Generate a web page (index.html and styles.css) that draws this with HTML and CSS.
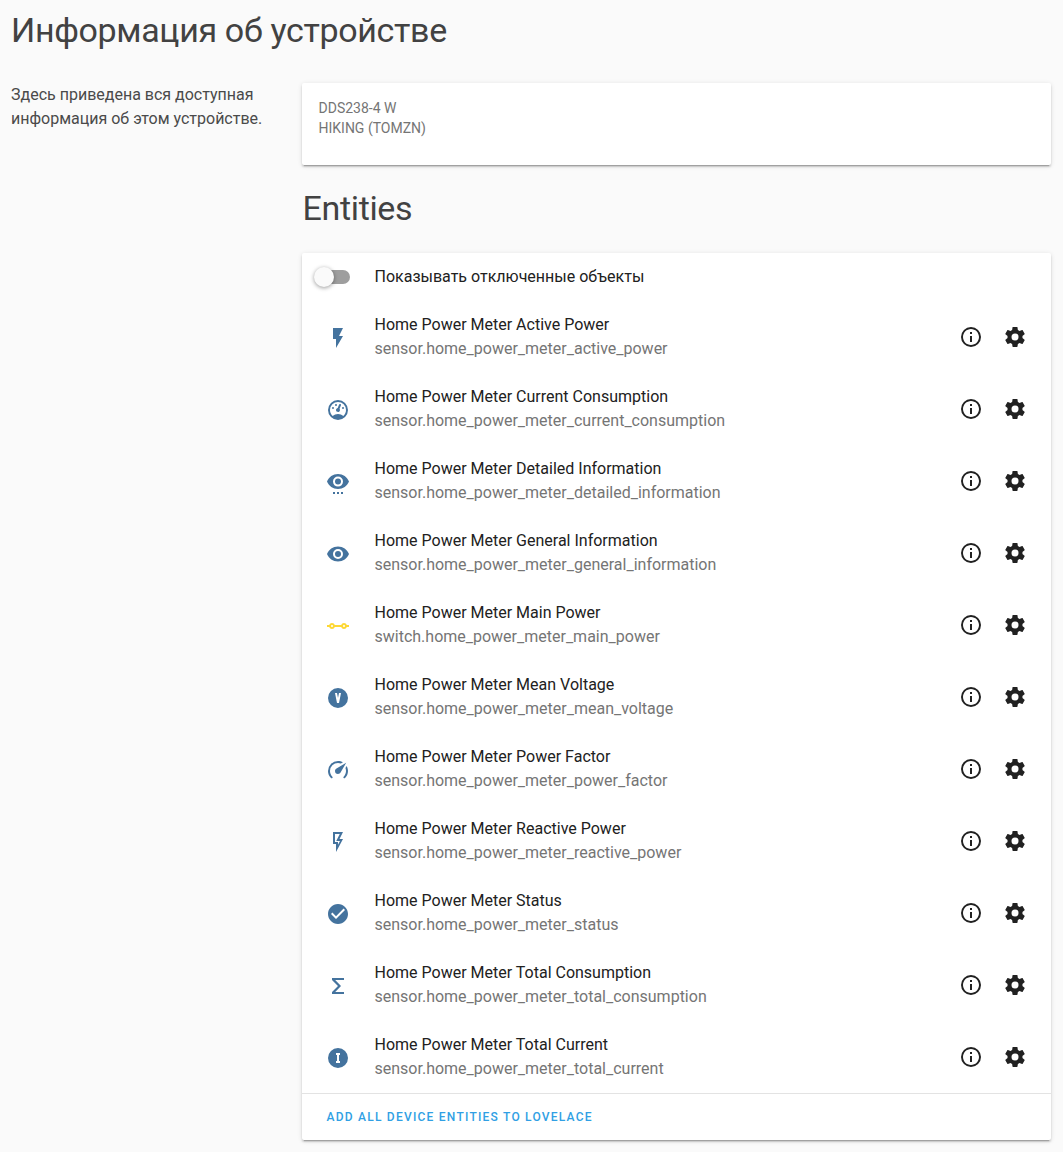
FILE: index.html
```html
<!DOCTYPE html>
<html lang="ru">
<head>
<meta charset="utf-8">
<title>Информация об устройстве</title>
<link rel="stylesheet" href="styles.css">
</head>
<body>
<svg class="sprite" aria-hidden="true">
  <symbol id="flash" viewBox="0 0 24 24"><path d="M7,2V13H10V22L17,10H13L17,2H7Z"/></symbol>
  <symbol id="gauge" viewBox="0 0 24 24"><path d="M12,2A10,10 0 0,0 2,12A10,10 0 0,0 12,22A10,10 0 0,0 22,12A10,10 0 0,0 12,2M12,4A8,8 0 0,1 20,12C20,14.4 19,16.5 17.3,18C15.9,16.7 14,16 12,16C10,16 8.2,16.7 6.7,18C5,16.5 4,14.4 4,12A8,8 0 0,1 12,4M14,5.89C13.62,5.9 13.26,6.15 13.1,6.54L11.81,9.77L11.71,10C11,10.13 10.41,10.6 10.14,11.26C9.73,12.29 10.23,13.45 11.26,13.86C12.29,14.27 13.45,13.77 13.86,12.74C14.12,12.08 14,11.32 13.57,10.76L13.67,10.5L14.96,7.29L14.97,7.26C15.17,6.75 14.92,6.17 14.41,5.96C14.28,5.91 14.15,5.89 14,5.89M10,6A1,1 0 0,0 9,7A1,1 0 0,0 10,8A1,1 0 0,0 11,7A1,1 0 0,0 10,6M7,9A1,1 0 0,0 6,10A1,1 0 0,0 7,11A1,1 0 0,0 8,10A1,1 0 0,0 7,9M17,9A1,1 0 0,0 16,10A1,1 0 0,0 17,11A1,1 0 0,0 18,10A1,1 0 0,0 17,9Z"/></symbol>
  <symbol id="eye" viewBox="0 0 24 24"><path d="M12,9A3,3 0 0,0 9,12A3,3 0 0,0 12,15A3,3 0 0,0 15,12A3,3 0 0,0 12,9M12,17A5,5 0 0,1 7,12A5,5 0 0,1 12,7A5,5 0 0,1 17,12A5,5 0 0,1 12,17M12,4.5C7,4.5 2.73,7.61 1,12C2.73,16.39 7,19.5 12,19.5C17,19.5 21.27,16.39 23,12C21.27,7.61 17,4.5 12,4.5Z"/></symbol>
  <symbol id="eye-dots" viewBox="0 0 24 24"><path transform="translate(0 -.4)" d="M12,9A3,3 0 0,0 9,12A3,3 0 0,0 12,15A3,3 0 0,0 15,12A3,3 0 0,0 12,9M12,17A5,5 0 0,1 7,12A5,5 0 0,1 12,7A5,5 0 0,1 17,12A5,5 0 0,1 12,17M12,4.5C7,4.5 2.73,7.61 1,12C2.73,16.39 7,19.5 12,19.5C17,19.5 21.27,16.39 23,12C21.27,7.61 17,4.5 12,4.5Z"/><path d="M7,22H9V24H7V22M11,22H13V24H11V22M15,22H17V24H15V22Z"/></symbol>
  <symbol id="switch" viewBox="0 0 24 24"><path d="M1,11H3.17A3,3 0 0,1 8.83,11H15.17A3,3 0 0,1 20.83,11H23V13H20.83A3,3 0 0,1 15.17,13H8.83A3,3 0 0,1 3.17,13H1V11M6,11A1,1 0 0,0 5,12A1,1 0 0,0 6,13A1,1 0 0,0 7,12A1,1 0 0,0 6,11M18,11A1,1 0 0,0 17,12A1,1 0 0,0 18,13A1,1 0 0,0 19,12A1,1 0 0,0 18,11Z"/></symbol>
  <symbol id="volt" viewBox="0 0 24 24"><path d="M12,2A10,10 0 0,1 22,12A10,10 0 0,1 12,22A10,10 0 0,1 2,12A10,10 0 0,1 12,2M9,7L11,17H13L15,7H13L12,12L11,7H9Z"/></symbol>
  <symbol id="speed" viewBox="0 0 24 24"><path d="M12,16A3,3 0 0,1 9,13C9,11.88 9.61,10.9 10.5,10.39L20.21,4.77L14.68,14.35C14.18,15.33 13.17,16 12,16M12,3C13.81,3 15.5,3.5 16.97,4.32L14.87,5.53C14,5.19 13,5 12,5A8,8 0 0,0 4,13C4,15.21 4.89,17.21 6.34,18.65H6.35C6.74,19.04 6.74,19.67 6.35,20.06C5.96,20.45 5.32,20.45 4.93,20.07V20.07C3.12,18.26 2,15.76 2,13A10,10 0 0,1 12,3M22,13C22,15.76 20.88,18.26 19.07,20.07V20.07C18.68,20.45 18.05,20.45 17.66,20.06C17.27,19.67 17.27,19.04 17.66,18.65V18.65C19.11,17.2 20,15.21 20,13C20,12 19.81,11 19.46,10.1L20.67,8C21.5,9.5 22,11.18 22,13Z"/></symbol>
  <symbol id="flash-outline" viewBox="0 0 24 24"><path d="M7,2H17L13.5,9H17L10,22V14H7V2M9,4V12H12V14.66L14,11H10.24L13.76,4H9Z"/></symbol>
  <symbol id="check" viewBox="0 0 24 24"><path d="M12 2C6.5 2 2 6.5 2 12S6.5 22 12 22 22 17.5 22 12 17.5 2 12 2M10 17L5 12L6.41 10.59L10 14.17L17.59 6.58L19 8L10 17Z"/></symbol>
  <symbol id="sigma" viewBox="0 0 24 24"><path d="M6,4H18V6H9.2L15,12L9.2,18H18V20H6V18L12,12L6,6Z"/></symbol>
  <symbol id="current" viewBox="0 0 24 24"><path d="M12,2A10,10 0 0,1 22,12A10,10 0 0,1 12,22A10,10 0 0,1 2,12A10,10 0 0,1 12,2M10,7V9H11V15H10V17H14V15H13V9H14V7H10Z"/></symbol>
  <symbol id="info" viewBox="0 0 24 24"><path d="M11,9H13V7H11M12,20C7.59,20 4,16.41 4,12C4,7.59 7.59,4 12,4C16.41,4 20,7.59 20,12C20,16.41 16.41,20 12,20M12,2A10,10 0 0,0 2,12A10,10 0 0,0 12,22A10,10 0 0,0 22,12A10,10 0 0,0 12,2M11,17H13V11H11V17Z"/></symbol>
  <symbol id="gear" viewBox="0 0 24 24"><path d="M12,15.5A3.5,3.5 0 0,1 8.5,12A3.5,3.5 0 0,1 12,8.5A3.5,3.5 0 0,1 15.5,12A3.5,3.5 0 0,1 12,15.5M19.43,12.97C19.47,12.65 19.5,12.33 19.5,12C19.5,11.67 19.47,11.34 19.43,11L21.54,9.37C21.73,9.22 21.78,8.95 21.66,8.73L19.66,5.27C19.54,5.05 19.27,4.96 19.05,5.05L16.56,6.05C16.04,5.66 15.5,5.32 14.87,5.07L14.5,2.42C14.46,2.18 14.25,2 14,2H10C9.75,2 9.54,2.18 9.5,2.42L9.13,5.07C8.5,5.32 7.96,5.66 7.44,6.05L4.95,5.05C4.73,4.96 4.46,5.05 4.34,5.27L2.34,8.73C2.21,8.95 2.27,9.22 2.46,9.37L4.57,11C4.53,11.34 4.5,11.67 4.5,12C4.5,12.33 4.53,12.65 4.57,12.97L2.46,14.63C2.27,14.78 2.21,15.05 2.34,15.27L4.34,18.73C4.46,18.95 4.73,19.03 4.95,18.95L7.44,17.94C7.96,18.34 8.5,18.68 9.13,18.93L9.5,21.58C9.54,21.82 9.75,22 10,22H14C14.25,22 14.46,21.82 14.5,21.58L14.87,18.93C15.5,18.67 16.04,18.34 16.56,17.94L19.05,18.95C19.27,19.03 19.54,18.95 19.66,18.73L21.66,15.27C21.78,15.05 21.73,14.78 21.54,14.63L19.43,12.97Z"/></symbol>
</svg>
<main class="page">
  <h1 class="title">Информация об устройстве</h1>
  <div class="layout">
    <p class="intro">Здесь приведена вся доступная информация об этом устройстве.</p>
    <div class="content">
      <section class="card device"><div>DDS238-4 W</div><div>HIKING (TOMZN)</div></section>
      <h2 class="title subtitle">Entities</h2>
      <section class="card">
        <label class="toggle-row"><span class="toggle"></span><span>Показывать отключенные объекты</span></label>
        <ul class="entities">
          <li class="entity"><svg class="icon state"><use href="#flash"/></svg><div class="names"><div>Home Power Meter Active Power</div><div class="id">sensor.home_power_meter_active_power</div></div><svg class="icon"><use href="#info"/></svg><svg class="icon"><use href="#gear"/></svg></li>
          <li class="entity"><svg class="icon state"><use href="#gauge"/></svg><div class="names"><div>Home Power Meter Current Consumption</div><div class="id">sensor.home_power_meter_current_consumption</div></div><svg class="icon"><use href="#info"/></svg><svg class="icon"><use href="#gear"/></svg></li>
          <li class="entity"><svg class="icon state"><use href="#eye-dots"/></svg><div class="names"><div>Home Power Meter Detailed Information</div><div class="id">sensor.home_power_meter_detailed_information</div></div><svg class="icon"><use href="#info"/></svg><svg class="icon"><use href="#gear"/></svg></li>
          <li class="entity"><svg class="icon state"><use href="#eye"/></svg><div class="names"><div>Home Power Meter General Information</div><div class="id">sensor.home_power_meter_general_information</div></div><svg class="icon"><use href="#info"/></svg><svg class="icon"><use href="#gear"/></svg></li>
          <li class="entity"><svg class="icon state on"><use href="#switch"/></svg><div class="names"><div>Home Power Meter Main Power</div><div class="id">switch.home_power_meter_main_power</div></div><svg class="icon"><use href="#info"/></svg><svg class="icon"><use href="#gear"/></svg></li>
          <li class="entity"><svg class="icon state"><use href="#volt"/></svg><div class="names"><div>Home Power Meter Mean Voltage</div><div class="id">sensor.home_power_meter_mean_voltage</div></div><svg class="icon"><use href="#info"/></svg><svg class="icon"><use href="#gear"/></svg></li>
          <li class="entity"><svg class="icon state"><use href="#speed"/></svg><div class="names"><div>Home Power Meter Power Factor</div><div class="id">sensor.home_power_meter_power_factor</div></div><svg class="icon"><use href="#info"/></svg><svg class="icon"><use href="#gear"/></svg></li>
          <li class="entity"><svg class="icon state"><use href="#flash-outline"/></svg><div class="names"><div>Home Power Meter Reactive Power</div><div class="id">sensor.home_power_meter_reactive_power</div></div><svg class="icon"><use href="#info"/></svg><svg class="icon"><use href="#gear"/></svg></li>
          <li class="entity"><svg class="icon state"><use href="#check"/></svg><div class="names"><div>Home Power Meter Status</div><div class="id">sensor.home_power_meter_status</div></div><svg class="icon"><use href="#info"/></svg><svg class="icon"><use href="#gear"/></svg></li>
          <li class="entity"><svg class="icon state"><use href="#sigma"/></svg><div class="names"><div>Home Power Meter Total Consumption</div><div class="id">sensor.home_power_meter_total_consumption</div></div><svg class="icon"><use href="#info"/></svg><svg class="icon"><use href="#gear"/></svg></li>
          <li class="entity"><svg class="icon state"><use href="#current"/></svg><div class="names"><div>Home Power Meter Total Current</div><div class="id">sensor.home_power_meter_total_current</div></div><svg class="icon"><use href="#info"/></svg><svg class="icon"><use href="#gear"/></svg></li>
        </ul>
        <div class="actions"><button class="add" type="button">ADD ALL DEVICE ENTITIES TO LOVELACE</button></div>
      </section>
    </div>
  </div>
</main>
</body>
</html>
```
FILE: styles.css
```css
* { box-sizing: border-box; }
body {
  margin: 0;
  background: #fafafa;
  color: #212121;
  font: 400 16px/24px Roboto, sans-serif;
}
.sprite { display: none; }
.page { padding: 10px 12px 12px 11px; }
.title {
  margin: 0;
  color: #424242;
  font-size: 34px;
  font-weight: 400;
  line-height: 40px;
  letter-spacing: -.01em;
}
.layout {
  display: grid;
  grid-template-columns: 291px 1fr;
  margin-top: 33px;
}
.intro {
  margin: 0;
  width: 262px;
  color: #4a4a4a;
}
.card {
  background: #fff;
  border-radius: 2px;
  box-shadow: 0 2px 2px 0 rgba(0, 0, 0, .14), 0 1px 5px 0 rgba(0, 0, 0, .12), 0 3px 1px -2px rgba(0, 0, 0, .2);
}
.device {
  height: 82px;
  padding: 15px 16.5px;
  color: #757575;
  font-size: 14px;
  line-height: 20px;
}
.subtitle { margin: 23px 0 25px .5px; }
.toggle-row {
  display: flex;
  align-items: center;
  gap: 24.5px;
  height: 48px;
  padding-left: 12px;
}
.toggle {
  display: flex;
  align-items: center;
  width: 36px;
  height: 14px;
  border-radius: 7px;
  background: linear-gradient(90deg, transparent 8px, #9e9e9e 8px);
}
.toggle::before {
  content: "";
  width: 20px;
  height: 20px;
  flex: none;
  border-radius: 50%;
  background: #fafafa;
  box-shadow: 0 1px 4px rgba(0, 0, 0, .4);
}
.entities {
  margin: 0;
  padding: 0;
  list-style: none;
}
.entity {
  display: flex;
  align-items: center;
  gap: 20px;
  height: 72px;
  padding: 0 24px;
}
.names { flex: 1; padding-left: 4.5px; }
.id { color: #757575; }
.icon {
  width: 24px;
  height: 24px;
  flex: none;
  fill: #212121;
}
.state { margin-top: 2px; fill: #44739e; }
.on { fill: #fdd835; }
.actions {
  height: 47px;
  padding-left: 24.5px;
  border-top: 1px solid #e3e3e3;
}
.add {
  padding: 0;
  border: 0;
  background: none;
  color: #309fe4;
  font: 500 12px/46px Roboto, sans-serif;
  letter-spacing: 1.23px;
}
```
